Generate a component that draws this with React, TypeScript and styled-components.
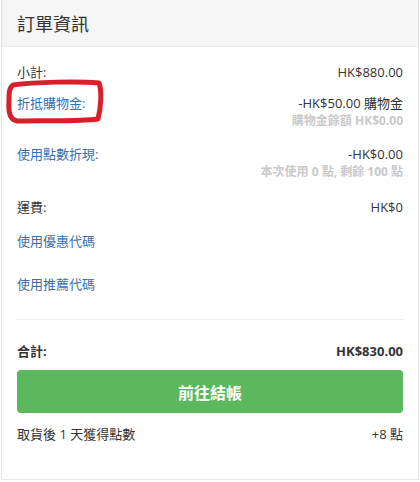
import React from 'react'
import styled, { createGlobalStyle } from 'styled-components'

const GlobalStyle = createGlobalStyle`
    body {
        margin: 0;
        background: #ffffff;
        font-family: 'Open Sans', 'Noto Sans CJK TC', sans-serif;
        color: #333333;
    }
`

const Card = styled.div`
    margin: 0 1px;
    width: 418px;
    height: 480px;
    box-sizing: border-box;
    border: 1px solid #e6e6e6;
    border-top: none;
    background: #fff;
`

const Header = styled.div`
    height: 47px;
    box-sizing: border-box;
    background: #f5f5f5;
    border-bottom: 1px solid #ebebeb;
    display: flex;
    align-items: center;
    padding: 0 15px;
`

const Title = styled.h3`
    margin: 0;
    font-size: 18px;
    font-weight: 400;
    color: #333;
`

const Body = styled.div`
    padding: 15px 15px 0 15px;
    position: relative;
`

const Row = styled.div<{ $mt?: number; $bold?: boolean }>`
    display: flex;
    justify-content: space-between;
    align-items: flex-start;
    margin-top: ${(p) => p.$mt ?? 0}px;
    font-size: 13px;
    line-height: 20px;
    font-weight: ${(p) => (p.$bold ? 700 : 400)};
`

const Label = styled.span<{ $link?: boolean }>`
    color: ${(p) => (p.$link ? '#3b6ea8' : '#333')};
`

const Amount = styled.div`
    display: flex;
    flex-direction: column;
    align-items: flex-end;
    text-align: right;
`

const SubNote = styled.span`
    font-size: 12px;
    line-height: 16px;
    font-weight: 700;
    color: #c9c9c9;
`

const Divider = styled.hr`
    margin: 25px 0 0 0;
    border: none;
    border-top: 1px solid #eeeeee;
`

const CheckoutButton = styled.button`
    display: block;
    width: 100%;
    height: 43px;
    margin-top: 9px;
    border: none;
    border-radius: 4px;
    background: #5cb85c;
    color: #fff;
    font-family: 'Open Sans', 'Noto Sans CJK TC', sans-serif;
    font-size: 16px;
    font-weight: 700;
    cursor: pointer;
`

// hand-drawn red mark around the store credit label
const Marker = styled.svg`
    position: absolute;
    left: 3px;
    top: 32px;
    width: 100px;
    height: 46px;
    pointer-events: none;
`

export default function App() {
    return (
        <>
            <GlobalStyle />
            <Card>
                <Header>
                    <Title>訂單資訊</Title>
                </Header>
                <Body>
                    <Marker viewBox="0 0 100 46">
                        <path
                            d="M8 6 C 30 3, 72 2, 94 4 C 97 12, 96 28, 93 40 C 70 43, 40 41, 12 42 C 5 41, 3 34, 4 22 C 4 14, 4 9, 8 6 Z"
                            fill="none"
                            stroke="#d8202a"
                            strokeWidth="5"
                            strokeLinejoin="round"
                        />
                    </Marker>
                    <Row>
                        <Label>小計:</Label>
                        <Amount>HK$880.00</Amount>
                    </Row>
                    <Row $mt={11}>
                        <Label $link>折抵購物金:</Label>
                        <Amount>
                            -HK$50.00 購物金
                            <SubNote>購物金餘額 HK$0.00</SubNote>
                        </Amount>
                    </Row>
                    <Row $mt={15}>
                        <Label $link>使用點數折現:</Label>
                        <Amount>
                            -HK$0.00
                            <SubNote>本次使用 0 點, 剩餘 100 點</SubNote>
                        </Amount>
                    </Row>
                    <Row $mt={17}>
                        <Label>運費:</Label>
                        <Amount>HK$0</Amount>
                    </Row>
                    <Row $mt={14}>
                        <Label $link>使用優惠代碼</Label>
                    </Row>
                    <Row $mt={23}>
                        <Label $link>使用推薦代碼</Label>
                    </Row>
                    <Divider />
                    <Row $mt={21} $bold>
                        <Label>合計:</Label>
                        <Amount>HK$830.00</Amount>
                    </Row>
                    <CheckoutButton>前往結帳</CheckoutButton>
                    <Row $mt={11}>
                        <Label>取貨後 1 天獲得點數</Label>
                        <Amount>+8 點</Amount>
                    </Row>
                </Body>
            </Card>
        </>
    )
}
